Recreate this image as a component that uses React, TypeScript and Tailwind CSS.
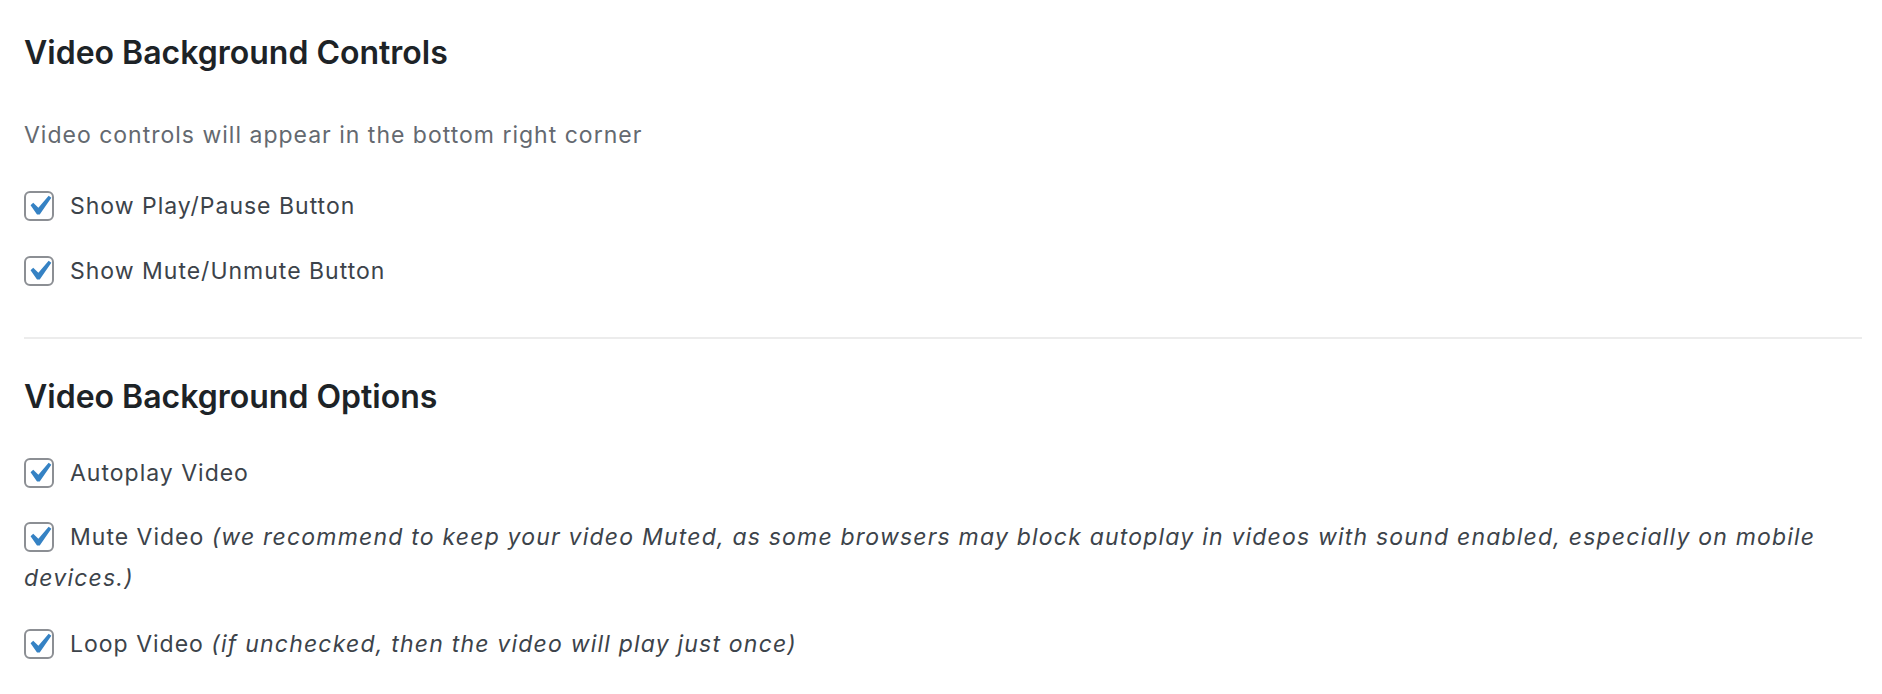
import type { ReactNode } from "react";

function Check() {
  return (
    <span className="mr-[16px] inline-flex h-[30px] w-[30px] items-center justify-center rounded-[6px] border-2 border-[#8c8f94] bg-white align-middle -mt-[4px]">
      <svg viewBox="0 0 20 20" className="h-[40px] w-[40px] shrink-0">
        <path d="M14.83 4.89l1.34.94-5.81 8.38H9.02L5.78 9.67l1.34-1.25 2.57 2.4z" fill="#3582c4" />
      </svg>
    </span>
  );
}

function Row({ children, className = "" }: { children: ReactNode; className?: string }) {
  return (
    <label className={"block text-[23px] tracking-[1px] text-[#3c434a] " + className}>
      <Check />
      {children}
    </label>
  );
}

export default function App() {
  return (
    <div className="min-h-screen bg-white pl-6 pr-5 font-['Inter',sans-serif]">
      <h2 className="pt-[33px] text-[32px] font-semibold leading-[40px] text-[#1d2327]">Video Background Controls</h2>
      <p className="mt-[43px] text-[23px] leading-[38px] tracking-[1px] text-[#646970]">
        Video controls will appear in the bottom right corner
      </p>
      <Row className="mt-[33px] leading-[38px]">Show Play/Pause Button</Row>
      <Row className="mt-[27px] leading-[38px]">Show Mute/Unmute Button</Row>
      <hr className="mt-[47px] border-0 border-t-2 border-[#ececec]" />
      <h2 className="mt-[38px] text-[32px] font-semibold leading-[40px] text-[#1d2327]">Video Background Options</h2>
      <Row className="mt-[37px] leading-[38px]">Autoplay Video</Row>
      <Row className="mt-[25px] leading-[41px]">
        Mute Video{" "}
        <em className="tracking-[1.2px]">
          (we recommend to keep your video Muted, as some browsers may block autoplay in videos with sound enabled,
          especially on mobile devices.)
        </em>
      </Row>
      <Row className="mt-[26px] leading-[38px]">
        Loop Video <em className="tracking-[1.2px]">(if unchecked, then the video will play just once)</em>
      </Row>
    </div>
  );
}
